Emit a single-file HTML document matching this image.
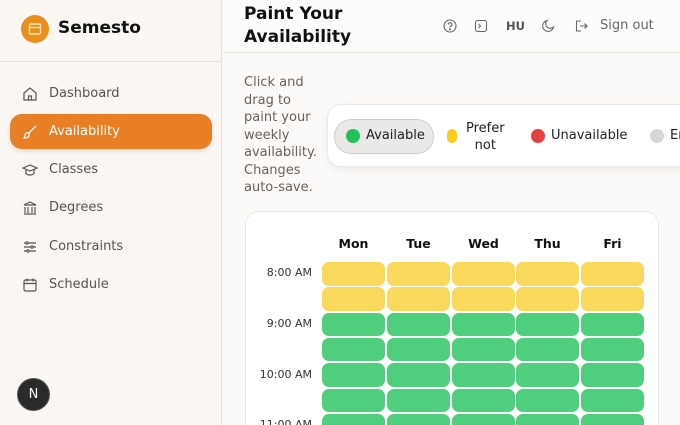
<!DOCTYPE html>
<html style="width:680px;height:425px;overflow:hidden"><head><style>
*{box-sizing:border-box;margin:0;padding:0}
body{width:680px;height:425px;overflow:hidden;font-family:"DejaVu Sans","Liberation Sans",sans-serif;background:#fcfaf8;color:#222}
#w{position:relative;width:680px;height:425px;overflow:hidden}
.sb{position:absolute;left:0;top:0;width:222px;height:425px;background:#faf6f2;border-right:1px solid #e8e2dc}
.logo{position:absolute;left:21px;top:15px;width:28px;height:28px;border-radius:50%;background:#eb8f1c}
.brand{position:absolute;left:58px;top:18px;font-size:17px;font-weight:bold;color:#111}
.sbl{position:absolute;left:0;top:61px;width:222px;border-top:1px solid #e5dfd9}
.nav{position:absolute;left:10px;width:202px;height:35px;border-radius:12px;font-size:13px;color:#5a5250;display:flex;align-items:center;padding-left:39px}
.nav svg{position:absolute;left:12px;top:10px}
.act{background:#e87f25;color:#fff;box-shadow:0 2px 4px rgba(0,0,0,.12)}
.nbtn{position:absolute;left:17px;top:378px;width:33px;height:33px;border-radius:50%;background:#2b2a2a;border:1px solid #555;color:#fff;font-size:13px;display:flex;align-items:center;justify-content:center}
.hdr{position:absolute;left:223px;top:0;right:0;height:53px;border-bottom:1px solid #e3dfdb;background:#fdfcfb}
.title{position:absolute;left:244px;top:3px;font-size:17px;font-weight:bold;line-height:23px;color:#111}
.hi{position:absolute;top:18px;color:#666;font-size:13px}
.desc{position:absolute;left:244px;top:74px;font-size:13px;line-height:17.5px;color:#6a605a;width:74px}
.leg{position:absolute;left:327px;top:104px;width:380px;height:63px;background:#fff;border:1px solid #ece7e2;border-radius:14px;box-shadow:0 3px 8px rgba(0,0,0,.06)}
.pill{position:absolute;left:6px;top:14px;width:100px;height:35px;border-radius:18px;background:#ebe9e7;border:1px solid #ccc;}
.dot{position:absolute;width:14px;height:14px;border-radius:50%}
.lt{position:absolute;font-size:13px;color:#222}
.card{position:absolute;left:245px;top:211px;width:414px;height:240px;background:#fff;border:1px solid #ece6e0;border-radius:14px}
.day{position:absolute;top:236px;width:63px;text-align:center;font-size:12.5px;font-weight:bold;color:#111}
.tm{position:absolute;left:250px;width:62px;text-align:right;font-size:11px;color:#333}
.c{position:absolute;width:63px;height:23.5px;border-radius:7px}
.y{background:#f8d95c}.g{background:#4fcf7e}
</style></head><body><div id="w">
<div class="sb">
<div class="logo"><svg width="28" height="28" viewBox="0 0 28 28"><rect x="8.5" y="9" width="11" height="10" rx="1.5" fill="none" stroke="#fde6b8" stroke-width="1.4"/><line x1="8.5" y1="12.5" x2="19.5" y2="12.5" stroke="#fde6b8" stroke-width="1.3"/></svg></div>
<div class="brand">Semesto</div>
<div class="sbl"></div>
<div class="nav" style="top:76px"><svg width="16" height="16" viewBox="0 0 16 16" fill="none" stroke="#555" stroke-width="1.2"><path d="M2 7L8 2l6 5v7H2z M6.5 14v-4h3v4"/></svg>Dashboard</div>
<div class="nav act" style="top:114px"><svg width="16" height="16" viewBox="0 0 16 16" fill="none" stroke="#fff" stroke-width="1.3"><path d="M14 2L7 9 M7 9c-2-1-4 0-4 3l-1 2c2 0 5 0 5-3z"/></svg>Availability</div>
<div class="nav" style="top:152px"><svg width="16" height="16" viewBox="0 0 16 16" fill="none" stroke="#555" stroke-width="1.2"><path d="M1 6l7-3 7 3-7 3z M4 7.5v4c2 2 6 2 8 0v-4"/></svg>Classes</div>
<div class="nav" style="top:190px"><svg width="16" height="16" viewBox="0 0 16 16" fill="none" stroke="#555" stroke-width="1.2"><path d="M2 5l6-3 6 3z M3 7v6 M6 7v6 M10 7v6 M13 7v6 M2 14h12"/></svg>Degrees</div>
<div class="nav" style="top:229px"><svg width="16" height="16" viewBox="0 0 16 16" fill="none" stroke="#555" stroke-width="1.2"><path d="M2 4h12 M2 8h12 M2 12h12"/><circle cx="5" cy="4" r="1.2" fill="#faf6f2"/><circle cx="10" cy="8" r="1.2" fill="#faf6f2"/><circle cx="6" cy="12" r="1.2" fill="#faf6f2"/></svg>Constraints</div>
<div class="nav" style="top:267px"><svg width="16" height="16" viewBox="0 0 16 16" fill="none" stroke="#555" stroke-width="1.2"><rect x="2" y="3" width="12" height="11" rx="1.5"/><path d="M2 6.5h12 M5 1.5v3 M11 1.5v3"/></svg>Schedule</div>
<div class="nbtn">N</div>
</div>
<div class="hdr"></div>
<div class="title">Paint Your<br>Availability</div>
<svg class="hi" style="left:443px;top:19px" width="14" height="14" viewBox="0 0 14 14" fill="none" stroke="#666" stroke-width="1.1"><circle cx="7" cy="7" r="6"/><path d="M5.3 5.5a1.8 1.8 0 1 1 2.3 1.7c-.5.2-.6.5-.6 1v.3"/><circle cx="7" cy="10.3" r=".5" fill="#666"/></svg>
<svg class="hi" style="left:474px;top:19px" width="14" height="14" viewBox="0 0 14 14" fill="none" stroke="#666" stroke-width="1.1"><rect x="1.5" y="1.5" width="11" height="11" rx="2"/><path d="M4.5 5l2 2-2 2"/></svg>
<div class="hi" style="left:506px;font-weight:bold;font-size:11.5px;top:19px;color:#555">HU</div>
<svg class="hi" style="left:541px;top:19px" width="14" height="14" viewBox="0 0 14 14" fill="none" stroke="#666" stroke-width="1.1"><path d="M6 1.5A5.5 5.5 0 1 0 12.5 8 4.5 4.5 0 0 1 6 1.5z"/></svg>
<svg class="hi" style="left:574px;top:19px" width="14" height="14" viewBox="0 0 14 14" fill="none" stroke="#666" stroke-width="1.1"><path d="M7 2H2.5v10H7 M6 7h7 M10.5 4.5L13 7l-2.5 2.5"/></svg>
<div class="hi" style="left:600px;top:18px">Sign out</div>
<div class="desc">Click and drag to paint your weekly availability. Changes auto-save.</div>
<div class="leg">
<div class="pill"></div>
<div class="dot" style="left:18px;top:24px;background:#22c05a"></div><div class="lt" style="left:38px;top:23px">Available</div>
<div class="dot" style="left:119px;top:24px;width:10px;border-radius:5px;background:#f7cc1a"></div><div class="lt" style="left:138px;top:15px;text-align:center;line-height:17px">Prefer<br>not</div>
<div class="dot" style="left:203px;top:24px;background:#e8403f"></div><div class="lt" style="left:223px;top:23px">Unavailable</div>
<div class="dot" style="left:322px;top:24px;background:#d6d6d6"></div><div class="lt" style="left:342px;top:23px">Empty</div>
</div>
<div class="card"></div>
<div class="day" style="left:322px">Mon</div><div class="day" style="left:387px">Tue</div><div class="day" style="left:452px">Wed</div><div class="day" style="left:516px">Thu</div><div class="day" style="left:581px">Fri</div>
<div class="tm" style="top:266px">8:00 AM</div><div class="tm" style="top:317px">9:00 AM</div><div class="tm" style="top:368px">10:00 AM</div><div class="tm" style="top:418px">11:00 AM</div>
<div id="g"></div>
<script>
var xs=[322,387,452,516,581],h='';
for(var r=0;r<7;r++){for(var i=0;i<5;i++){h+='<div class="c '+(r<2?'y':'g')+'" style="left:'+xs[i]+'px;top:'+(262+r*25.3)+'px"></div>';}}
document.getElementById('g').innerHTML=h;
</script>
</div></body></html>
